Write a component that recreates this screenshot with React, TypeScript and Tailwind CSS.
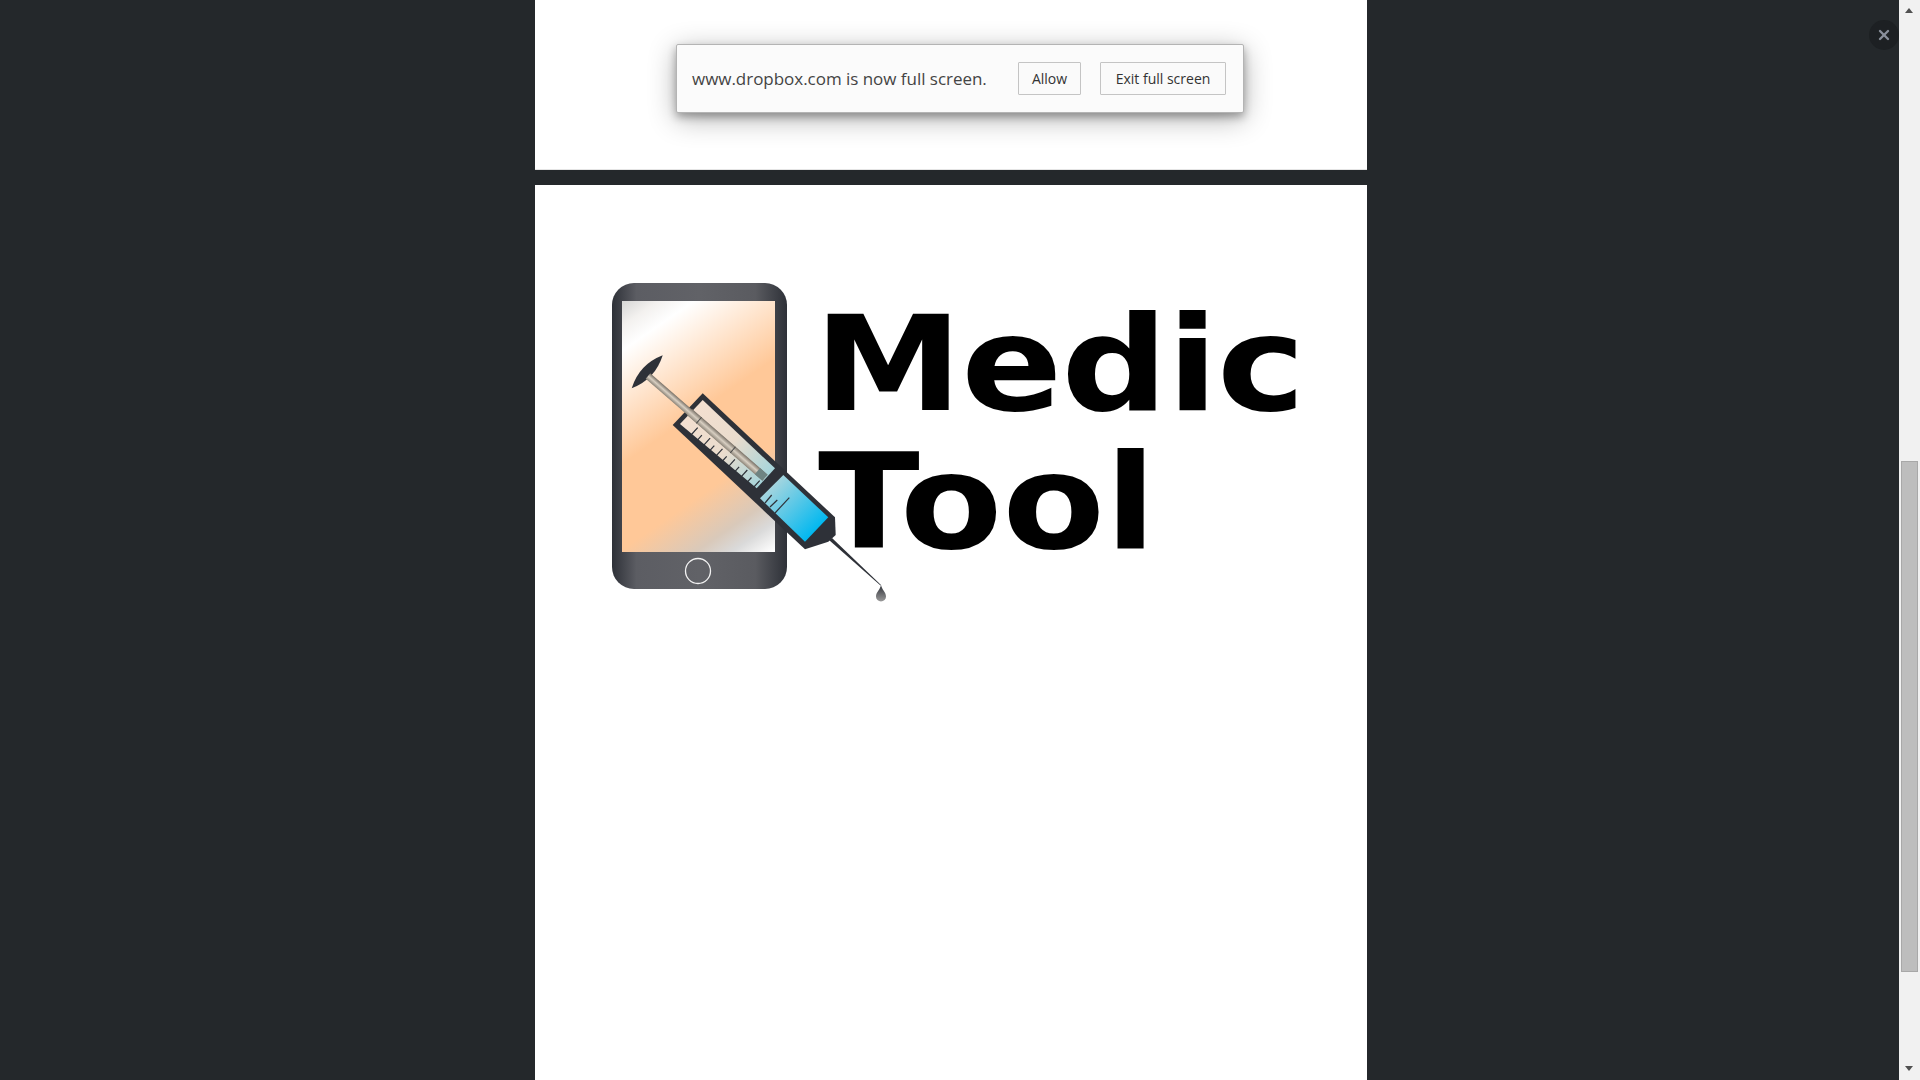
import { X } from 'lucide-react'

const barrelTicks = [0, 1, 2, 3, 4, 5, 6, 7, 8, 9, 10]

function Logo() {
  return (
    <svg width="290" height="340" viewBox="600 280 290 340" className="shrink-0">
      <defs>
        <linearGradient id="body" x1="612" y1="0" x2="787" y2="0" gradientUnits="userSpaceOnUse">
          <stop offset="0" stopColor="#2e3138" />
          <stop offset="0.14" stopColor="#5c5d63" />
          <stop offset="0.5" stopColor="#616267" />
          <stop offset="0.82" stopColor="#5a5b60" />
          <stop offset="1" stopColor="#2e3138" />
        </linearGradient>
        <linearGradient id="screen" x1="615" y1="306" x2="781" y2="546" gradientUnits="userSpaceOnUse">
          <stop offset="0" stopColor="#d6d6d6" />
          <stop offset="0.07" stopColor="#f3f1ef" />
          <stop offset="0.14" stopColor="#ffffff" />
          <stop offset="0.46" stopColor="#ffc898" />
          <stop offset="0.7" stopColor="#ffc898" />
          <stop offset="0.85" stopColor="#d9c9ba" />
          <stop offset="0.92" stopColor="#dadada" />
          <stop offset="1" stopColor="#ffffff" />
        </linearGradient>
        <linearGradient id="glass" x1="690" y1="412" x2="770" y2="480" gradientUnits="userSpaceOnUse">
          <stop offset="0" stopColor="#f3dfd0" />
          <stop offset="0.5" stopColor="#eadccd" />
          <stop offset="1" stopColor="#a0d4dc" />
        </linearGradient>
        <linearGradient id="liquid" x1="772" y1="486" x2="817" y2="530" gradientUnits="userSpaceOnUse">
          <stop offset="0" stopColor="#a4d5df" />
          <stop offset="1" stopColor="#00b8f0" />
        </linearGradient>
        <linearGradient id="rod" x1="0" y1="0" x2="0" y2="1">
          <stop offset="0" stopColor="#7a7268" />
          <stop offset="0.5" stopColor="#d8cfc2" />
          <stop offset="1" stopColor="#8c8478" />
        </linearGradient>
        <linearGradient id="drop" x1="0" y1="0" x2="0" y2="1">
          <stop offset="0" stopColor="#2e3138" />
          <stop offset="1" stopColor="#9a9a9a" />
        </linearGradient>
      </defs>

      {/* phone */}
      <rect x="612" y="283" width="175" height="306" rx="22" fill="url(#body)" />
      <rect x="622" y="301" width="153" height="251" fill="url(#screen)" />
      <circle cx="698" cy="571" r="12.5" fill="none" stroke="#f2f2f2" strokeWidth="1.3" />

      {/* needle and drop */}
      <polygon points="829,540 832,538 881,585 880.5,585.5" fill="#2e3138" />
      <path d="M881 585 C882 590 886 592 886 596.5 A5 5 0 0 1 876 596.5 C876 592 880 590 881 585 Z" fill="url(#drop)" />

      {/* barrel */}
      <polygon points="702.7,393.3 672.7,425 805,549.3 828.3,541.7 835.7,535 835,517.3" fill="#2e3138" />
      <polygon points="702.7,400 680,424 756.7,488.3 775,468.3" fill="url(#glass)" />
      <polygon points="783.3,475 828.3,517.3 805,541.7 760,498.3" fill="url(#liquid)" />

      {/* plunger */}
      <path d="M631.7 388.3 Q639.2 364.3 662.7 355.3 Q655.2 379.3 631.7 388.3 Z" fill="#2e3138" />
      <g transform="translate(648 376) rotate(41)">
        <rect x="0" y="-3.5" width="155" height="7" fill="url(#rod)" />
        <rect x="55" y="-4" width="100" height="8" fill="url(#rod)" />
        <rect x="67" y="-4" width="1" height="8" fill="#4a4a4a" />
        <rect x="112" y="-4" width="1" height="8" fill="#4a4a4a" />
        <rect x="145" y="-4" width="10" height="8" fill="#6f8482" />
      </g>

      {/* scale */}
      {barrelTicks.map((i) => {
        const x = 691 + i * 6.2
        const y = 435 + i * 5.3
        const len = i % 2 === 0 ? 10 : 7
        return <line key={i} x1={x} y1={y} x2={x + len * 0.67} y2={y - len * 0.74} stroke="#2e3138" strokeWidth="1.2" />
      })}
      <line x1="765" y1="503" x2="771.7" y2="495" stroke="#2e3138" strokeWidth="1.2" />
      <line x1="770" y1="507" x2="777.3" y2="500" stroke="#2e3138" strokeWidth="1.2" />
      <line x1="775" y1="513" x2="789.3" y2="497.7" stroke="#2e3138" strokeWidth="1.2" />
    </svg>
  )
}

export default function App() {
  return (
    <div className="relative flex h-screen overflow-hidden bg-[#24282b] font-['Open_Sans',sans-serif]">
      <main className="flex flex-1 justify-center pl-[3px]">
        <div className="flex w-[832px] flex-col">
          <div className="h-[170px] shrink-0 border-b border-[#e4e4e4] bg-white" />
          <div className="h-[15px] shrink-0" />
          <div className="flex flex-1 items-start bg-white pt-[95px] pl-[65px]">
            <Logo />
            <div className="-ml-[72px] mt-[15px] whitespace-nowrap font-['DejaVu_Sans',sans-serif] text-[132px] leading-[138px] font-bold text-black">
              <div className="ml-[-4px] origin-left scale-x-[1.13] tracking-[-1px]">Medic</div>
              <div className="origin-left scale-x-[1.13]">Tool</div>
            </div>
          </div>
        </div>
      </main>

      {/* scrollbar */}
      <div className="flex w-[21px] shrink-0 flex-col items-center bg-[#f1f1f1]">
        <svg width="8" height="5" viewBox="0 0 8 5" className="mt-[8px] ml-[-1px] shrink-0">
          <polygon points="4,0 8,5 0,5" fill="#505050" />
        </svg>
        <div className="mt-[448px] h-[511px] w-[17px] shrink-0 border border-[#a8a8a8] bg-[#bdbdbd]" />
        <svg width="8" height="5" viewBox="0 0 8 5" className="mt-[94px] ml-[-1px] shrink-0">
          <polygon points="0,0 8,0 4,5" fill="#505050" />
        </svg>
      </div>

      {/* full screen prompt */}
      <div className="absolute top-[44px] left-[676px] flex h-[69px] w-[568px] items-center rounded-[2px] border border-[#b4b4b4] bg-[#fbfbfb] pl-[15px] shadow-[0_4px_8px_rgba(0,0,0,0.3),0_6px_28px_rgba(0,0,0,0.3)]">
        <span className="w-[326px] whitespace-nowrap text-[17px] tracking-[-0.03px] text-[#444444]">www.dropbox.com is now full screen.</span>
        <button className="flex h-[33px] w-[63px] items-center justify-center rounded-[1px] border border-[#c4c4c4] bg-[#fafafa] text-[14px] text-[#333333]">
          Allow
        </button>
        <button className="ml-[19px] flex h-[33px] w-[126px] items-center justify-center rounded-[1px] border border-[#c4c4c4] bg-[#fafafa] text-[14px] text-[#333333]">
          Exit full screen
        </button>
      </div>

      {/* close */}
      <div className="absolute top-[20px] left-[1869px] flex h-[30px] w-[30px] items-center justify-center rounded-full bg-[#1d2023]">
        <X size={16} strokeWidth={3.5} className="text-[#8b909c]" />
      </div>
    </div>
  )
}
